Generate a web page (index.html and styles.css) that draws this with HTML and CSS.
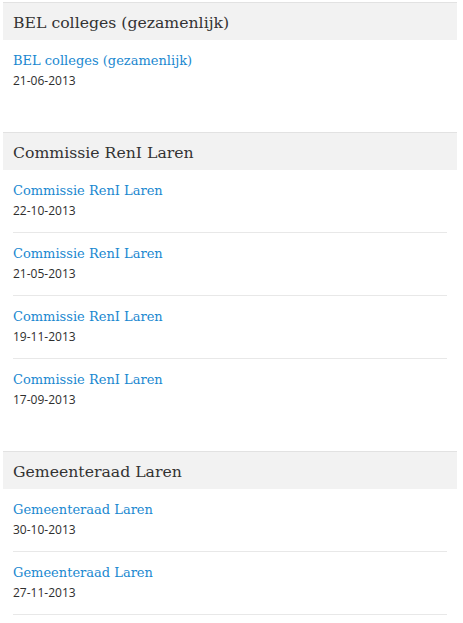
FILE: index.html
```html
<!DOCTYPE html>
<html lang="nl">
<head>
<meta charset="utf-8">
<title>Vergaderingen</title>
<link rel="stylesheet" href="styles.css">
</head>
<body>
<div class="page">
  <section class="group">
    <h2 class="group__title">BEL colleges (gezamenlijk)</h2>
    <ul class="list">
      <li class="item"><a class="item__link" href="#">BEL colleges (gezamenlijk)</a><div class="item__date">21-06-2013</div></li>
    </ul>
  </section>
  <section class="group">
    <h2 class="group__title">Commissie RenI Laren</h2>
    <ul class="list">
      <li class="item"><a class="item__link" href="#">Commissie RenI Laren</a><div class="item__date">22-10-2013</div></li>
      <li class="item"><a class="item__link" href="#">Commissie RenI Laren</a><div class="item__date">21-05-2013</div></li>
      <li class="item"><a class="item__link" href="#">Commissie RenI Laren</a><div class="item__date">19-11-2013</div></li>
      <li class="item"><a class="item__link" href="#">Commissie RenI Laren</a><div class="item__date">17-09-2013</div></li>
    </ul>
  </section>
  <section class="group">
    <h2 class="group__title">Gemeenteraad Laren</h2>
    <ul class="list list--continues">
      <li class="item"><a class="item__link" href="#">Gemeenteraad Laren</a><div class="item__date">30-10-2013</div></li>
      <li class="item"><a class="item__link" href="#">Gemeenteraad Laren</a><div class="item__date">27-11-2013</div></li>
    </ul>
  </section>
</div>
</body>
</html>
```
FILE: styles.css
```css
html, body {
  margin: 0;
  padding: 0;
  background: #ffffff;
}
body {
  overflow: hidden;
}
.page {
  padding: 2px 6px 0 3px;
}
.group {
  margin-bottom: 30px;
}
.group__title {
  margin: 0;
  height: 37px;
  line-height: 40px;
  padding: 0 10px;
  background: #f2f2f2;
  border-top: 1px solid #e2e2e2;
  font-family: "DejaVu Serif", serif;
  font-weight: normal;
  font-size: 15.7px;
  color: #333333;
}
.list {
  list-style: none;
  margin: 0;
  padding: 0 10px;
}
.item {
  padding: 11px 0 11px;
  border-bottom: 1px solid #e8e8e8;
}
.item:last-child {
  border-bottom: 0;
}
.list--continues .item:last-child {
  border-bottom: 1px solid #e8e8e8;
}
.item__link {
  display: block;
  line-height: 20px;
  font-family: "DejaVu Serif", serif;
  font-size: 13px;
  color: #1a88d0;
  text-decoration: none;
}
.item__date {
  line-height: 20px;
  font-family: "Open Sans", sans-serif;
  font-size: 12px;
  color: #2e2e2e;
}
```
